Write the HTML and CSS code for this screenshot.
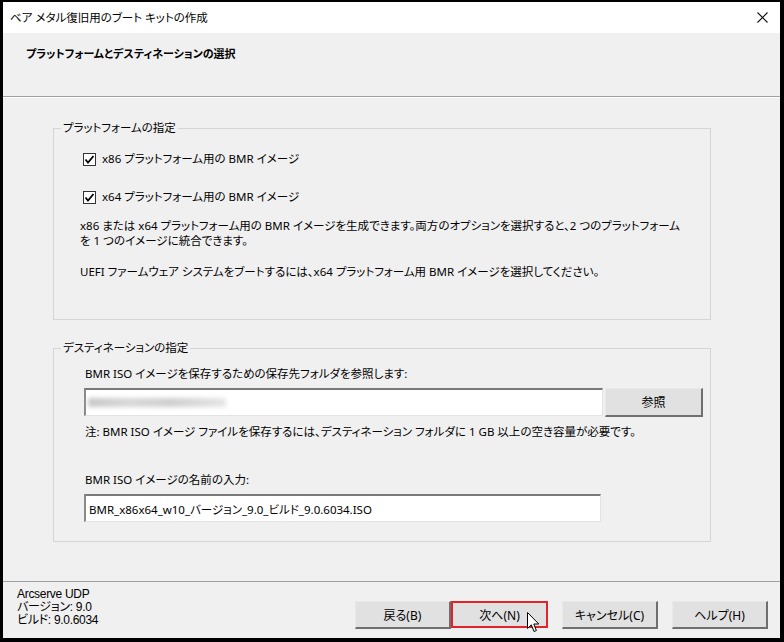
FILE: index.html
```html
<!DOCTYPE html>
<html lang="ja">
  <head>
    <meta charset="UTF-8" />
    <title>ベア メタル復旧用のブート キットの作成</title>
    <link rel="stylesheet" href="styles.css">
  </head>
  <body>
    <div class="window">
      <div class="titlebar">
        <span>ベア メタル復旧用のブート キットの作成</span>
        <svg class="close" width="11" height="11" viewBox="0 0 11 11"><path d="M0.5 0.5 L10.5 10.5 M10.5 0.5 L0.5 10.5" stroke="#111" stroke-width="1.1" fill="none"/></svg>
      </div>

      <div class="header">
        <strong>プラットフォームとデスティネーションの選択</strong>
      </div>

      <div class="content">
        <fieldset class="group group-platform">
          <legend>プラットフォームの指定</legend>
          <div class="group-body">
            <div class="check-row">
              <span class="checkbox"><svg width="11" height="11" viewBox="0 0 11 11"><path d="M1.5 5.5 L4 8.5 L9.5 2" stroke="#000" stroke-width="1.8" fill="none"/></svg></span>
              <span>x86 プラットフォーム用の BMR イメージ</span>
            </div>
            <div class="check-row second">
              <span class="checkbox"><svg width="11" height="11" viewBox="0 0 11 11"><path d="M1.5 5.5 L4 8.5 L9.5 2" stroke="#000" stroke-width="1.8" fill="none"/></svg></span>
              <span>x64 プラットフォーム用の BMR イメージ</span>
            </div>
            <p class="note">x86 または x64 プラットフォーム用の BMR イメージを生成できます。両方のオプションを選択すると、2 つのプラットフォーム<br>を 1 つのイメージに統合できます。</p>
            <p class="note uefi">UEFI ファームウェア システムをブートするには、x64 プラットフォーム用 BMR イメージを選択してください。</p>
          </div>
        </fieldset>

        <fieldset class="group group-dest">
          <legend>デスティネーションの指定</legend>
          <div class="group-body">
            <div class="field-label">BMR ISO イメージを保存するための保存先フォルダを参照します:</div>
            <div class="path-row">
              <div class="textbox path-box"><span class="blurred"></span></div>
              <button class="btn browse">参照</button>
            </div>
            <div class="field-label hint">注: BMR ISO イメージ ファイルを保存するには、デスティネーション フォルダに 1 GB 以上の空き容量が必要です。</div>
            <div class="field-label name-label">BMR ISO イメージの名前の入力:</div>
            <div class="textbox name-box">BMR_x86x64_w10_バージョン_9.0_ビルド_9.0.6034.ISO</div>
          </div>
        </fieldset>
      </div>

      <div class="footer">
        <div class="product">
          <div>Arcserve UDP</div>
          <div>バージョン: 9.0</div>
          <div>ビルド: 9.0.6034</div>
        </div>
        <div class="buttons">
          <button class="btn">戻る(B)</button>
          <button class="btn marked">次へ(N)</button>
          <button class="btn gap">キャンセル(C)</button>
          <button class="btn gap">ヘルプ(H)</button>
        </div>
        <svg class="cursor" width="14" height="22" viewBox="0 0 14 22"><path d="M0.5 0.5 L0.5 16.5 L4.3 12.8 L7 19.5 L9.4 18.5 L6.8 12 L11.8 12 Z" fill="#fff" stroke="#000" stroke-width="1"/></svg>
      </div>
    </div>
  </body>
</html>
```

FILE: styles.css
```css
body {
  margin: 0;
  padding: 0;
  font-family: "Noto Sans", "Noto Sans CJK JP", sans-serif;
  font-size: 11.5px;
  font-feature-settings: "palt";
  color: #000;
}
.window {
  width: 784px;
  height: 642px;
  box-sizing: border-box;
  border-style: solid;
  border-color: #000;
  border-width: 2px 4px 4px 3px;
  background-color: #f0f0f0;
  display: flex;
  flex-direction: column;
}
.titlebar {
  height: 31px;
  background-color: #fff;
  display: flex;
  align-items: center;
  justify-content: space-between;
  padding: 0 12px 0 7px;
  line-height: 16px;
}
.header {
  height: 64px;
  box-sizing: border-box;
  padding: 13px 0 0 23px;
  line-height: 16px;
  font-size: 11px;
  border-bottom: 1px solid #a0a0a0;
  box-shadow: 0 1px 0 #fff;
}
.header strong {
  font-weight: bold;
}
.content {
  flex: 1;
  padding: 23px 0 0 50px;
}
.group {
  width: 658px;
  box-sizing: border-box;
  margin: 0;
  padding: 0;
  border: 1px solid #d5d5d5;
  min-width: 0;
}
.group legend {
  margin-left: 7px;
  padding: 0 2px;
  line-height: 16px;
}
.group-platform {
  height: 200px;
}
.group-platform .group-body {
  padding: 15px 0 0 29px;
}
.group-dest {
  height: 202px;
  margin-top: 20px;
}
.group-dest .group-body {
  padding: 10px 0 0 31px;
}
.check-row {
  display: flex;
  align-items: center;
  line-height: 16px;
}
.check-row.second {
  margin-top: 22px;
}
.checkbox {
  width: 11px;
  height: 11px;
  border: 1px solid #333;
  background-color: #fff;
  margin-right: 6px;
  display: flex;
}
.note {
  margin: 13px 0 0 -3px;
  line-height: 15px;
}
.note.uefi {
  margin-top: 16px;
}
.field-label {
  line-height: 16px;
}
.path-row {
  display: flex;
  margin-top: 6px;
  margin-left: -1px;
}
.textbox {
  box-sizing: border-box;
  background-color: #fff;
  border-style: solid;
  border-width: 2px 1px 1px 2px;
  border-color: #7a7a7a #e3e3e3 #e3e3e3 #8a8a8a;
  height: 28px;
  display: flex;
  align-items: center;
  padding-left: 2px;
}
.path-box {
  width: 519px;
}
.blurred {
  display: block;
  width: 138px;
  height: 9px;
  background: linear-gradient(90deg, #c8c8c8, #d8d8d8 30%, #cfcfcf 60%, #e6e6e6);
  filter: blur(2px);
}
.btn {
  box-sizing: border-box;
  height: 29px;
  background-color: #e1e1e1;
  border-style: solid;
  border-width: 1px 2px 2px 1px;
  border-color: #e8e8e8 #6f6f6f #6f6f6f #e8e8e8;
  font-family: "Noto Sans", "Noto Sans CJK JP", sans-serif;
  font-size: 12px;
  font-feature-settings: "palt";
  padding: 0;
  color: #000;
}
.browse {
  width: 98px;
  margin-left: 2px;
}
.hint {
  margin-top: 7px;
}
.name-label {
  margin-top: 32px;
}
.name-box {
  width: 517px;
  margin-top: 6px;
  margin-left: -1px;
  padding-left: 3px;
}
.footer {
  height: 56px;
  border-top: 1px solid #a0a0a0;
  display: flex;
  position: relative;
}
.product {
  padding: 6px 0 0 14px;
  font-family: "Liberation Sans", "Noto Sans CJK JP", sans-serif;
  font-size: 12px;
  line-height: 13px;
  letter-spacing: -0.3px;
}
.buttons {
  margin: 19px 12px 0 auto;
  display: flex;
  align-items: flex-start;
}
.buttons .btn {
  width: 96px;
  height: 28px;
}
.buttons .btn.gap {
  margin-left: 14px;
}
.buttons .marked {
  width: 97px;
  border: 2px solid #e3222a;
  height: 27px;
}
.cursor {
  position: absolute;
  left: 524px;
  top: 30px;
}
```
